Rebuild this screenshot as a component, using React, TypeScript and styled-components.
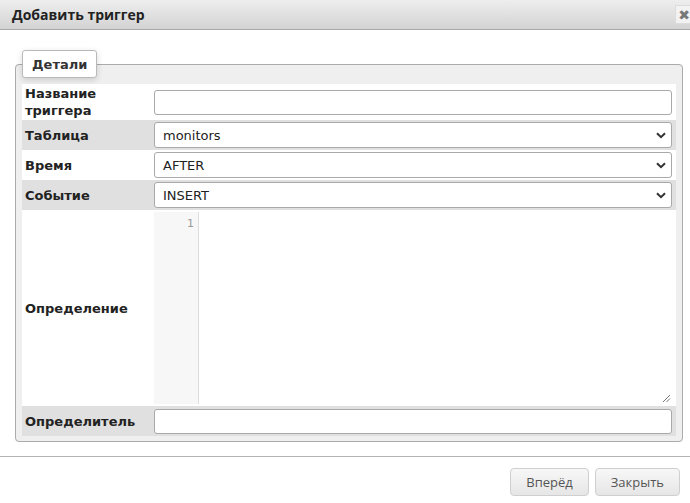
import styled, { createGlobalStyle } from 'styled-components'

const GlobalStyle = createGlobalStyle`
  html, body {
    margin: 0;
    padding: 0;
    background: #ffffff;
  }
  body {
    font-family: 'DejaVu Sans', Verdana, sans-serif;
    font-size: 13px;
    color: #222;
  }
`

const Dialog = styled.div`
  width: 690px;
  height: 503px;
  display: flex;
  flex-direction: column;
  overflow: hidden;
`

const TitleBar = styled.div`
  height: 29px;
  flex: none;
  display: flex;
  align-items: center;
  justify-content: space-between;
  padding-left: 12px;
  background: linear-gradient(#eeeeee, #d3d3d3);
  border-bottom: 1px solid #a8a8a8;
`

const Title = styled.div`
  font-family: 'Open Sans', sans-serif;
  font-weight: 700;
  font-size: 14px;
  color: #222;
`

const CloseButton = styled.div`
  width: 16px;
  height: 17px;
  margin-right: -3px;
  background: #f2f2f2;
  border: 1px solid #dcdcdc;
  display: flex;
  align-items: center;
  justify-content: center;
  color: #777;
  font-size: 14px;
  font-weight: 700;
  line-height: 1;
`

const Body = styled.div`
  flex: none;
  padding: 20px 7px 0 15px;
`

const Fieldset = styled.fieldset`
  margin: 0;
  padding: 6px 6px 5px 6px;
  border: 1px solid #ababab;
  border-radius: 4px;
  background: #efefef;
  min-inline-size: 0;
`

const Legend = styled.legend`
  margin-left: 0;
  padding: 0 9px;
  height: 28px;
  box-sizing: border-box;
  display: flex;
  align-items: center;
  background: #ffffff;
  border: 1px solid #b9b9b9;
  border-radius: 3px;
  box-shadow: 0 2px 6px rgba(0, 0, 0, 0.15);
  font-weight: 700;
  color: #333;
  font-size: 13px;
`

const Row = styled.div<{ shaded?: boolean; height: number }>`
  display: flex;
  align-items: center;
  height: ${(p) => p.height}px;
  background: ${(p) => (p.shaded ? '#e0e0e0' : '#ffffff')};
`

const Label = styled.div`
  width: 130px;
  flex: none;
  padding-left: 3px;
  box-sizing: border-box;
  font-weight: 700;
  color: #222;
  line-height: 17px;
`

const Field = styled.div`
  flex: 1;
  padding: 0 4px 0 2px;
  display: flex;
  align-items: center;
  align-self: stretch;
`

const TextInput = styled.input`
  width: 100%;
  height: 25px;
  box-sizing: border-box;
  border: 1px solid #a9a9a9;
  border-radius: 3px;
  background: #fff;
  font-family: inherit;
  font-size: 13px;
  padding: 0 8px;
  outline: none;
`

const SelectBox = styled.div`
  width: 100%;
  height: 26px;
  box-sizing: border-box;
  border: 1px solid #a9a9a9;
  border-radius: 3px;
  background: #fff;
  display: flex;
  align-items: center;
  justify-content: space-between;
  padding: 0 5px 0 8px;
  color: #222;
`

const Editor = styled.div`
  flex: 1;
  align-self: stretch;
  margin: 2px 0;
  display: flex;
  background: #fff;
  position: relative;
`

const Gutter = styled.div`
  width: 45px;
  flex: none;
  background: #f7f7f7;
  border-right: 1px solid #dddddd;
  box-sizing: border-box;
  text-align: right;
  padding: 5px 4px 0 0;
  font-size: 11px;
  color: #999;
`

const CodeArea = styled.div`
  flex: 1;
`

const ResizeGrip = styled.svg`
  position: absolute;
  right: 1px;
  bottom: 1px;
`

const Separator = styled.div`
  height: 1px;
  flex: none;
  background: #b3b3b3;
  margin-top: 14px;
`

const Footer = styled.div`
  display: flex;
  justify-content: flex-end;
  gap: 6px;
  padding: 11px 10px 0 0;
`

const Button = styled.button`
  height: 28px;
  padding: 0 15px;
  border: 1px solid #cfcfcf;
  border-radius: 4px;
  background: linear-gradient(#f7f7f7, #e6e6e6);
  font-family: 'Open Sans', sans-serif;
  font-size: 13px;
  color: #555;
`

const Chevron = () => (
  <svg width="10" height="7" viewBox="0 0 10 7">
    <path d="M1 1.2 L5 5.2 L9 1.2" fill="none" stroke="#333" strokeWidth="2" />
  </svg>
)

const App = () => {
  return (
    <>
      <GlobalStyle />
      <Dialog>
        <TitleBar>
          <Title>Добавить триггер</Title>
          <CloseButton>✖</CloseButton>
        </TitleBar>
        <Body>
          <Fieldset>
            <Legend>Детали</Legend>
            <Row height={36}>
              <Label>Название триггера</Label>
              <Field>
                <TextInput defaultValue="" />
              </Field>
            </Row>
            <Row shaded height={30}>
              <Label>Таблица</Label>
              <Field>
                <SelectBox>
                  monitors
                  <Chevron />
                </SelectBox>
              </Field>
            </Row>
            <Row height={30}>
              <Label>Время</Label>
              <Field>
                <SelectBox>
                  AFTER
                  <Chevron />
                </SelectBox>
              </Field>
            </Row>
            <Row shaded height={30}>
              <Label>Событие</Label>
              <Field>
                <SelectBox>
                  INSERT
                  <Chevron />
                </SelectBox>
              </Field>
            </Row>
            <Row height={196}>
              <Label>Определение</Label>
              <Field>
                <Editor>
                  <Gutter>1</Gutter>
                  <CodeArea />
                  <ResizeGrip width="9" height="9" viewBox="0 0 9 9">
                    <path d="M1 8 L8 1 M4.5 8 L8 4.5" stroke="#777" strokeWidth="1" />
                  </ResizeGrip>
                </Editor>
              </Field>
            </Row>
            <Row shaded height={30}>
              <Label>Определитель</Label>
              <Field>
                <TextInput defaultValue="" />
              </Field>
            </Row>
          </Fieldset>
        </Body>
        <Separator />
        <Footer>
          <Button>Вперёд</Button>
          <Button>Закрыть</Button>
        </Footer>
      </Dialog>
    </>
  )
}

export default App
